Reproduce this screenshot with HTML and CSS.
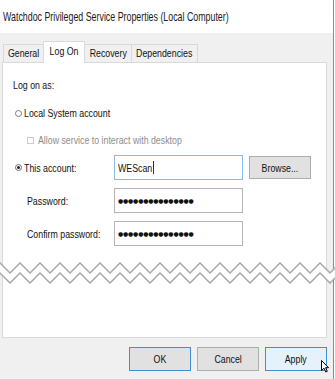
FILE: index.html
```html
<!DOCTYPE html>
<html lang="en">
<head>
	<title>Watchdoc Privileged Service Properties</title>
	<meta charset="utf-8">
	<link rel="stylesheet" href="styles.css">
</head>
<body>
	<div class="window">
		<div class="titlebar">
			<span class="t title">Watchdoc Privileged Service Properties (Local Computer)</span>
			<svg class="close" width="9" height="9" viewBox="0 0 9 9">
				<path d="M0.5 0.5 L8.5 8.5 M8.5 0.5 L0.5 8.5" stroke="#333" stroke-width="1" fill="none"/>
			</svg>
		</div>
		<div class="content">
			<div class="tabs">
				<div class="tab general"><span class="t c">General</span></div>
				<div class="tab active logon"><span class="t c">Log On</span></div>
				<div class="tab recovery"><span class="t c">Recovery</span></div>
				<div class="tab deps"><span class="t c">Dependencies</span></div>
			</div>
			<div class="panel">
				<div class="heading"><span class="t">Log on as:</span></div>
				<div class="option"><span class="radio"></span><span class="t">Local System account</span></div>
				<div class="option sub disabled"><span class="check"></span><span class="t">Allow service to interact with desktop</span></div>
				<div class="field-row">
					<div class="field-label"><span class="radio on"></span><span class="t">This account:</span></div>
					<div class="field focus"><span class="t">WEScan<span class="caret"></span></span></div>
					<div class="btn browse"><span class="t c">Browse...</span></div>
				</div>
				<div class="field-row">
					<div class="field-label indent"><span class="t">Password:</span></div>
					<div class="field"><span class="dots">●●●●●●●●●●●●●●●</span></div>
				</div>
				<div class="field-row">
					<div class="field-label indent"><span class="t">Confirm password:</span></div>
					<div class="field"><span class="dots">●●●●●●●●●●●●●●●</span></div>
				</div>
				<svg class="tear" width="335" height="22">
					<defs>
						<pattern id="zig" width="20" height="22" patternUnits="userSpaceOnUse">
							<polygon points="-10,11 0,1 10,11 20,1 30,11 30,21 20,11 10,21 0,11 -10,21" fill="#fff"/>
							<polyline points="-10,11 0,1 10,11 20,1 30,11" fill="none" stroke="#a8a8a8" stroke-width="1.5"/>
							<polyline points="-10,21 0,11 10,21 20,11 30,21" fill="none" stroke="#a8a8a8" stroke-width="1.5"/>
						</pattern>
					</defs>
					<rect width="335" height="22" fill="url(#zig)"/>
				</svg>
			</div>
			<div class="actions">
				<div class="btn default"><span class="t c">OK</span></div>
				<div class="btn"><span class="t c">Cancel</span></div>
				<div class="btn hover"><span class="t c">Apply</span></div>
			</div>
		</div>
		<svg class="pointer" width="9" height="13" viewBox="0 0 9 13">
			<path d="M0.5 0.5 L0.5 10.5 L3 8.2 L4.8 12 L6.3 11.3 L4.6 7.7 L7.6 7.7 Z" fill="#fff" stroke="#000" stroke-width="1"/>
		</svg>
	</div>
</body>
</html>
```

FILE: styles.css
```css
* {
	box-sizing: border-box;
}

html, body {
	margin: 0;
	background-color: #fff;
	font-family: "Liberation Sans", Arial, sans-serif;
	font-size: 11px;
	color: #111;
}

/* the dialog font is narrow, so text runs are squeezed horizontally */
.t {
	display: inline-block;
	white-space: nowrap;
	transform: scaleX(0.8);
	transform-origin: left center;
}

	.t.c {
		transform-origin: center center;
	}

.window {
	position: relative;
	width: 334px;
	height: 379px;
	display: flex;
	flex-direction: column;
	background-color: #f0f0f0;
	border-right: 1px solid #8a8a8a;
	border-image: linear-gradient(#8a8a8a 20px, #5b9bd5 20px, #5b9bd5 38px, #8a8a8a 38px) 1;
}

.titlebar {
	height: 33px;
	display: flex;
	align-items: center;
	padding-left: 3px;
	background-color: #fff;
}

	.titlebar .title {
		font-size: 13px;
		color: #1a1a1a;
		transform: scaleX(0.68);
	}

	.titlebar .close {
		margin-left: auto;
		margin-right: 9px;
	}

.content {
	flex: 1;
	display: flex;
	flex-direction: column;
	padding: 8px 6px 8px 2px;
}

.tabs {
	display: flex;
	align-items: flex-end;
	padding-left: 1px;
	height: 21px;
}

.tab {
	height: 18px;
	display: flex;
	justify-content: center;
	align-items: center;
	padding-bottom: 1px;
	border: 1px solid #d9d9d9;
	border-bottom: none;
	margin-left: -1px;
	background-color: #f0f0f0;
}

	.tab.general {
		width: 41px;
		margin-left: 0;
	}

	.tab.logon {
		width: 42px;
	}

	.tab.recovery {
		width: 48px;
	}

	.tab.deps {
		width: 67px;
	}

	.tab.active {
		position: relative;
		z-index: 1;
		height: 22px;
		padding-bottom: 4px;
		margin-bottom: -1px;
		background-color: #fff;
	}

.panel {
	flex: 1;
	display: flex;
	flex-direction: column;
	padding-left: 12px;
	background-color: #fff;
	border: 1px solid #d9d9d9;
}

.heading {
	margin-top: 15px;
	margin-left: -2px;
	line-height: 14px;
}

.option {
	display: flex;
	align-items: center;
	height: 14px;
	margin-top: 14px;
}

	.option.sub {
		margin-top: 13px;
		padding-left: 12px;
	}

	.option.disabled {
		color: #8d8d8d;
	}

.radio {
	width: 7px;
	height: 7px;
	margin-right: 2px;
	border: 1px solid #7a7a7a;
	border-radius: 50%;
	background-color: #fff;
	display: flex;
	align-items: center;
	justify-content: center;
	flex-shrink: 0;
}

	.radio.on {
		border-color: #6d6d6d;
	}

		.radio.on::after {
			content: "";
			width: 3px;
			height: 3px;
			border-radius: 50%;
			background-color: #222;
		}

.check {
	width: 7px;
	height: 7px;
	margin-right: 4px;
	border: 1px solid #cccccc;
	background-color: #fff;
}

.field-row {
	display: flex;
	align-items: center;
	height: 25px;
	margin-top: 8px;
}

.field-label {
	width: 99px;
	display: flex;
	align-items: center;
}

	.field-label.indent {
		padding-left: 12px;
	}

.field {
	width: 129px;
	height: 25px;
	display: flex;
	align-items: center;
	padding-left: 3px;
	border: 1px solid #b4b4b4;
	background-color: #fff;
}

	.field.focus {
		border-color: #8bbbe8;
	}

.caret {
	display: inline-block;
	width: 1.25px;
	height: 13px;
	margin-left: 1px;
	vertical-align: -2px;
	background-color: #000;
}

.dots {
	font-family: "DejaVu Sans", sans-serif;
	font-size: 6px;
	letter-spacing: -0.2px;
	color: #111;
}

.btn {
	width: 62px;
	height: 24px;
	display: flex;
	align-items: center;
	justify-content: center;
	border: 1px solid #adadad;
	background-color: #e1e1e1;
}

	.btn.browse {
		height: 23px;
		margin-left: 6px;
	}

	.btn.default {
		border-color: #3c8fd9;
	}

	.btn.hover {
		border-color: #3c8fd9;
		background-color: #e5f1fb;
	}

.tear {
	display: block;
	margin-top: 16px;
	margin-left: -15px;
	flex-shrink: 0;
}

.actions {
	display: flex;
	justify-content: flex-end;
	gap: 6px;
	margin-top: 9px;
}

.pointer {
	position: absolute;
	left: 321px;
	top: 360px;
}
```
